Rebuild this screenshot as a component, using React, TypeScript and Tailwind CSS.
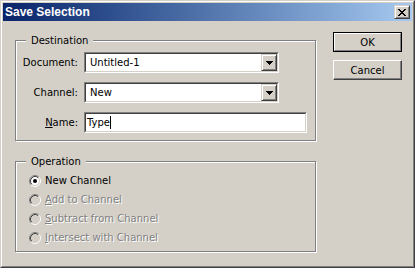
import React from 'react';

// small win2000-ish pieces
const Radio = ({ checked, disabled }: { checked?: boolean; disabled?: boolean }) => (
  <svg width="12" height="12" viewBox="0 0 12 12" className="shrink-0">
    <circle cx="6" cy="6" r="4.5" fill={disabled ? '#d4d0c8' : '#ffffff'} />
    <path d="M2.11 9.89 A5.5 5.5 0 0 1 9.89 2.11" stroke="#808080" fill="none" />
    <path d="M9.89 2.11 A5.5 5.5 0 0 1 2.11 9.89" stroke="#ffffff" fill="none" />
    <path d="M2.82 9.18 A4.5 4.5 0 0 1 9.18 2.82" stroke="#404040" fill="none" />
    <path d="M9.18 2.82 A4.5 4.5 0 0 1 2.82 9.18" stroke="#d4d0c8" fill="none" />
    {checked && <circle cx="6" cy="6" r="2" fill="#000000" />}
  </svg>
);

const DownArrow = () => (
  <svg width="7" height="4" viewBox="0 0 7 4" shapeRendering="crispEdges">
    <rect x="0" y="0" width="7" height="1" fill="#000" />
    <rect x="1" y="1" width="5" height="1" fill="#000" />
    <rect x="2" y="2" width="3" height="1" fill="#000" />
    <rect x="3" y="3" width="1" height="1" fill="#000" />
  </svg>
);

const CloseGlyph = () => (
  <svg width="8" height="7" viewBox="0 0 8 7" shapeRendering="crispEdges">
    <rect x="0" y="0" width="2" height="1" /><rect x="6" y="0" width="2" height="1" />
    <rect x="1" y="1" width="2" height="1" /><rect x="5" y="1" width="2" height="1" />
    <rect x="2" y="2" width="4" height="1" />
    <rect x="3" y="3" width="2" height="1" />
    <rect x="2" y="4" width="4" height="1" />
    <rect x="1" y="5" width="2" height="1" /><rect x="5" y="5" width="2" height="1" />
    <rect x="0" y="6" width="2" height="1" /><rect x="6" y="6" width="2" height="1" />
  </svg>
);

const Sunken = ({ width, children }: { width: string; children: React.ReactNode }) => (
  <div className={`${width} h-[21px] flex border border-t-[#808080] border-l-[#808080] border-r-white border-b-white`}>
    <div className="flex-1 flex items-center bg-white border border-t-[#404040] border-l-[#404040] border-r-[#d4d0c8] border-b-[#d4d0c8]">
      {children}
    </div>
  </div>
);

const Combo = ({ value }: { value: string }) => (
  <Sunken width="w-[195px]">
    <span className="pl-[4px]">{value}</span>
    <div className="ml-auto w-[16px] h-full flex items-center justify-center bg-[#d4d0c8] border border-t-[#d4d0c8] border-l-[#d4d0c8] border-r-[#404040] border-b-[#404040] shadow-[inset_1px_1px_0_#fff,inset_-1px_-1px_0_#808080]">
      <DownArrow />
    </div>
  </Sunken>
);

const GroupBox = ({ title, height, className, children }: { title: string; height: string; className?: string; children: React.ReactNode }) => (
  <div className={`w-[301px] ${height} border border-[#808080] shadow-[inset_1px_1px_0_#fff,1px_1px_0_#fff] ${className ?? ''}`}>
    <div className="-mt-[7px] ml-[10px] px-[5px] w-fit bg-[#d4d0c8] leading-[13px]">{title}</div>
    {children}
  </div>
);

const FieldRow = ({ label, children }: { label: React.ReactNode; children: React.ReactNode }) => (
  <div className="flex items-center h-[21px]">
    <div className="w-[62px] text-right">{label}</div>
    <div className="ml-[6px]">{children}</div>
  </div>
);

const RadioRow = ({ checked, disabled, children }: { checked?: boolean; disabled?: boolean; children: React.ReactNode }) => (
  <div className="flex items-center h-[19px] pl-[13px] gap-[4px]">
    <Radio checked={checked} disabled={disabled} />
    <span className={disabled ? 'text-[#808080] [text-shadow:1px_1px_0_#fff]' : 'text-black'}>{children}</span>
  </div>
);

export default function App() {
  return (
    <div className="w-[415px] h-[268px] bg-[#d4d0c8] border border-t-[#d4d0c8] border-l-[#d4d0c8] border-r-[#404040] border-b-[#404040] font-['DejaVu_Sans',sans-serif] text-[10px] leading-[13px] text-black select-none">
      <div className="h-full flex flex-col p-px border border-t-white border-l-white border-r-[#808080] border-b-[#808080]">
        {/* title bar */}
        <div className="h-[18px] shrink-0 flex items-center pl-[2px] pr-[2px] bg-gradient-to-r from-[#0a246a] to-[#a6caf0]">
          <span className="text-white font-bold text-[12px] font-['Liberation_Sans',sans-serif]">Save Selection</span>
          <div className="ml-auto w-[16px] h-[14px] flex items-center justify-center bg-[#d4d0c8] border border-t-[#d4d0c8] border-l-[#d4d0c8] border-r-[#404040] border-b-[#404040] shadow-[inset_1px_1px_0_#fff,inset_-1px_-1px_0_#808080]">
            <CloseGlyph />
          </div>
        </div>

        <div className="flex flex-1">
          {/* left column */}
          <div className="ml-[12px] mt-[19px]">
            <GroupBox title="Destination" height="h-[101px]">
              <div className="mt-[5px] flex flex-col gap-[9px]">
                <FieldRow label="Document:">
                  <Combo value="Untitled-1" />
                </FieldRow>
                <FieldRow label="Channel:">
                  <Combo value="New" />
                </FieldRow>
                <FieldRow label={<><span className="underline">N</span>ame:</>}>
                  <Sunken width="w-[223px]">
                    <span className="pl-[1px]">Type</span>
                    <span className="w-px h-[13px] bg-black" />
                  </Sunken>
                </FieldRow>
              </div>
            </GroupBox>

            <GroupBox title="Operation" height="h-[91px]" className="mt-[20px]">
              <div className="mt-[3px]">
                <RadioRow checked>New Channel</RadioRow>
                <RadioRow disabled><span className="underline">A</span>dd to Channel</RadioRow>
                <RadioRow disabled><span className="underline">S</span>ubtract from Channel</RadioRow>
                <RadioRow disabled><span className="underline">I</span>ntersect with Channel</RadioRow>
              </div>
            </GroupBox>
          </div>

          {/* buttons */}
          <div className="ml-[17px] mt-[11px] flex flex-col gap-[8px]">
            <div className="w-[69px] h-[20px] flex border border-black">
              <div className="flex-1 flex items-center justify-center border border-t-white border-l-white border-r-[#808080] border-b-[#808080]">
                OK
              </div>
            </div>
            <div className="w-[69px] h-[20px] flex items-center justify-center border border-t-white border-l-white border-r-[#404040] border-b-[#404040] shadow-[inset_-1px_-1px_0_#808080]">
              Cancel
            </div>
          </div>
        </div>
      </div>
    </div>
  );
}
